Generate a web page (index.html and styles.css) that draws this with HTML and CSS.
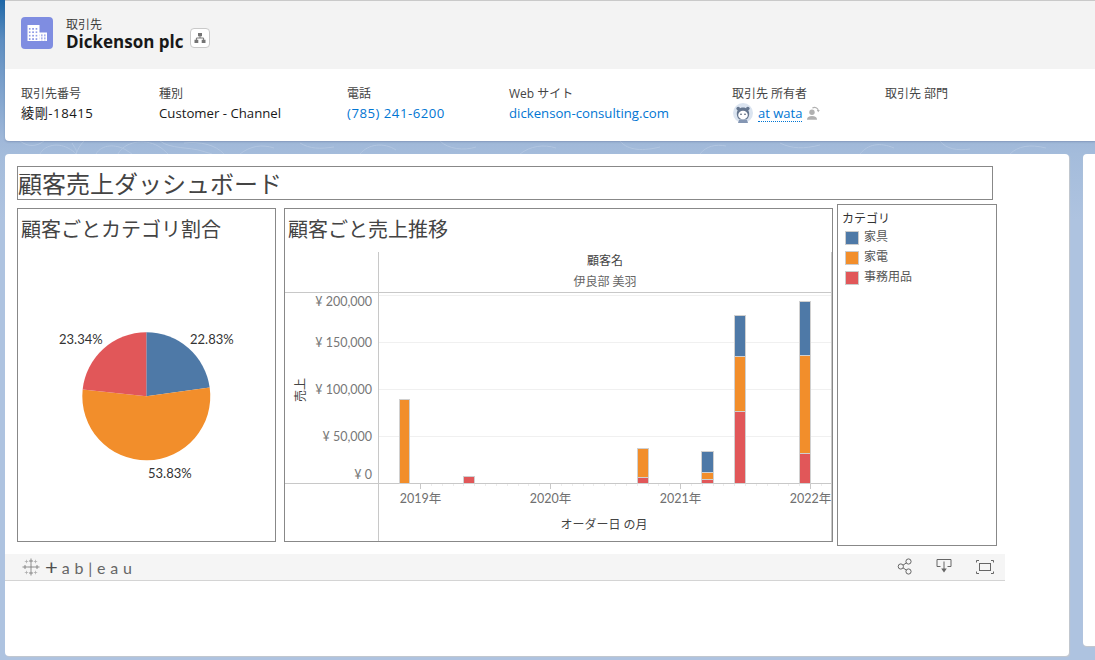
FILE: index.html
```html
<!DOCTYPE html>
<html lang="ja">
<head>
    <meta charset="UTF-8">
    <title>Dickenson plc</title>
    <link rel="stylesheet" href="styles.css">
</head>
<body>
    <!-- 背景の模様 -->
    <svg class="swirls" viewBox="0 141 1095 13" width="1095" height="13">
        <path d="M20 141c8 6 16 6 24 0M40 154c4-8 16-12 28-6 4 2 6 4 8 6M72 143c2 4 6 8 4 11M84 141c-4 4-6 8-8 13M96 154c6-10 20-10 30-4l6 4M118 154c6-12 26-16 40-8 4 2 8 6 10 8M160 141c10 8 30 6 42 10l10 3M184 143c16-2 32 2 40 11M240 154c10-8 22-10 34-6M300 143c10 6 20 6 34 4M360 154c8-10 24-12 36-4M440 141c8 8 24 10 36 6M520 154c10-8 24-10 36-6M620 141c8 10 24 10 40 6M700 154c6-8 16-10 26-8M780 143c12 6 24 6 40 2M860 154c8-10 20-12 34-6M940 141c6 8 18 10 30 8M1010 154c8-8 20-10 36-6" fill="none" stroke="#b2c6e1"/>
    </svg>

    <!-- 取引先ヘッダー -->
    <header class="record">
        <div class="record-top">
            <svg class="record-icon" viewBox="0 0 32 32">
                <defs>
                    <pattern id="windows" x="7.800" y="11" width="3.400" height="3.400" patternUnits="userSpaceOnUse">
                        <rect width="1.700" height="1.700" fill="#8f9be6"/>
                    </pattern>
                    <pattern id="windows-low" x="20" y="17.500" width="3" height="3" patternUnits="userSpaceOnUse">
                        <rect width="1.600" height="1.600" fill="#8f9be6"/>
                    </pattern>
                </defs>
                <rect width="32" height="32" rx="4" fill="#7f8de1"/>
                <rect x="6.500" y="8" width="12" height="16" fill="#fff"/>
                <rect x="7.500" y="11" width="10.500" height="12.500" fill="url(#windows)"/>
                <rect x="17" y="15.500" width="9" height="8.500" fill="#fff"/>
                <rect x="18.500" y="17" width="6.500" height="6.500" fill="url(#windows-low)"/>
            </svg>
            <div class="record-name">
                <div class="record-type">取引先</div>
                <h1>Dickenson plc</h1>
            </div>
            <button class="hierarchy-btn">
                <svg viewBox="0 0 12 12" width="12" height="12">
                    <path d="M4 1h4v3.200H4zM0.500 7.800h3.800V11H0.500zM7.700 7.800h3.800V11H7.700z" fill="#747474"/>
                    <path d="M6 4v2H2.400v2M6 6h3.600v2" fill="none" stroke="#747474"/>
                </svg>
            </button>
        </div>
        <div class="fields">
            <div><div class="field-label">取引先番号</div><div class="field-value num">綾剛-18415</div></div>
            <div><div class="field-label">種別</div><div class="field-value">Customer - Channel</div></div>
            <div><div class="field-label">電話</div><div class="field-value num link">(785) 241-6200</div></div>
            <div><div class="field-label">Web サイト</div><div class="field-value link">dickenson-consulting.com</div></div>
            <div>
                <div class="field-label">取引先 所有者</div>
                <div class="field-value owner">
                    <svg class="avatar" viewBox="0 0 20 20">
                        <circle cx="10" cy="10" r="10" fill="#dbe4f0"/>
                        <circle cx="5.200" cy="5.600" r="1.800" fill="#65768f"/>
                        <circle cx="14.800" cy="5.600" r="1.800" fill="#65768f"/>
                        <path d="M3.800 11c0-4 2.700-6.400 6.200-6.400s6.200 2.400 6.200 6.400c0 3-1.800 5-3 5.600H6.800c-1.200-.6-3-2.600-3-5.600z" fill="#65768f"/>
                        <ellipse cx="10" cy="12" rx="4.800" ry="4.300" fill="#fff"/>
                        <circle cx="8" cy="11.200" r=".8" fill="#3a4a62"/>
                        <circle cx="12" cy="11.200" r=".8" fill="#3a4a62"/>
                        <path d="M6 17h8l1 3H5z" fill="#8496b3"/>
                    </svg>
                    <span class="owner-name link">at wata</span>
                    <svg class="owner-change" viewBox="0 0 14 14">
                        <circle cx="6" cy="6.200" r="2.700" fill="#b0b0b0"/>
                        <path d="M1 13.800c0-2.600 1.800-3.800 5-3.800s5 1.200 5 3.800z" fill="#b0b0b0"/>
                        <path d="M6.400 2c2.600-1.400 5.400-.4 6 2.600" fill="none" stroke="#b0b0b0" stroke-width="1.100"/>
                        <path d="M10.800 4h3l-1.500 2.200z" fill="#b0b0b0"/>
                    </svg>
                </div>
            </div>
            <div><div class="field-label">取引先 部門</div></div>
        </div>
    </header>

    <div class="cards">
        <main class="dash-card">
            <div class="dash-title">顧客売上ダッシュボード</div>

            <div class="dash-row">
                <section class="panel pie-panel">
                    <h2>顧客ごとカテゴリ割合</h2>
                    <!-- viewBox はページ座標のまま -->
                    <svg class="plot" viewBox="18 249 257 292" width="257" height="292">
                        <path d="M146.300 396.300V332.300A64 64 0 0 1 209.700 387.600Z" fill="#4e79a7"/>
                        <path d="M146.300 396.300L209.700 387.600A64 64 0 1 1 82.650 389.600Z" fill="#f28e2b"/>
                        <path d="M146.300 396.300L82.650 389.600A64 64 0 0 1 146.300 332.300Z" fill="#e15759"/>
                        <text class="pct" x="190" y="344">22.83%</text>
                        <text class="pct" x="59" y="344">23.34%</text>
                        <text class="pct" x="148" y="478">53.83%</text>
                    </svg>
                </section>

                <section class="panel chart-panel">
                    <h2>顧客ごと売上推移</h2>
                    <svg class="plot" viewBox="285 249 547 292" width="547" height="292">
                        <path class="grid" d="M378 295.500H831M378 342.500H831M378 389.500H831M378 436.500H831"/>
                        <path class="axis" d="M378.500 252V541M285 292.500H831M285 483.500H831M831.500 252V541"/>
                        <path class="axis" d="M420.500 484v5M550.500 484v5M680.500 484v5M810.500 484v5"/>
                        <path class="minor" d="M431.500 484v2M442.500 484v2M453.500 484v2M463.500 484v2M474.500 484v2M485.500 484v2M496.500 484v2M507.500 484v2M518.500 484v2M528.500 484v2M539.500 484v2M561.500 484v2M572.500 484v2M583.500 484v2M593.500 484v2M604.500 484v2M615.500 484v2M626.500 484v2M637.500 484v2M648.500 484v2M658.500 484v2M669.500 484v2M691.500 484v2M702.500 484v2M713.500 484v2M723.500 484v2M734.500 484v2M745.500 484v2M756.500 484v2M767.500 484v2M778.500 484v2M788.500 484v2M799.500 484v2M821.500 484v2"/>

                        <text class="head" x="605" y="265">顧客名</text>
                        <text class="head sub" x="605" y="286">伊良部 美羽</text>

                        <text class="tick" x="372" y="306">¥ 200,000</text>
                        <text class="tick" x="372" y="347">¥ 150,000</text>
                        <text class="tick" x="372" y="394">¥ 100,000</text>
                        <text class="tick" x="372" y="441">¥ 50,000</text>
                        <text class="tick" x="372" y="479">¥ 0</text>
                        <text class="axis-title" transform="translate(305 390) rotate(-90)">売上</text>

                        <text class="year" x="420.500" y="503">2019年</text>
                        <text class="year" x="550.500" y="503">2020年</text>
                        <text class="year" x="680.500" y="503">2021年</text>
                        <text class="year" x="810.500" y="503">2022年</text>
                        <text class="head" x="604" y="529">オーダー日 の月</text>

                        <rect class="bar orange" x="399.500" y="399.500" width="10" height="84"/>
                        <rect class="bar red" x="463.500" y="476.500" width="11" height="7"/>

                        <rect class="bar orange" x="637.500" y="448.500" width="11" height="29"/>
                        <rect class="bar red" x="637.500" y="477.500" width="11" height="6"/>

                        <rect class="bar blue" x="701.500" y="451.500" width="12" height="21"/>
                        <rect class="bar orange" x="701.500" y="472.500" width="12" height="7"/>
                        <rect class="bar red" x="701.500" y="479.500" width="12" height="4"/>

                        <rect class="bar blue" x="734.500" y="315.500" width="11" height="41"/>
                        <rect class="bar orange" x="734.500" y="356.500" width="11" height="55"/>
                        <rect class="bar red" x="734.500" y="411.500" width="11" height="72"/>

                        <rect class="bar blue" x="799.500" y="301.500" width="11" height="54"/>
                        <rect class="bar orange" x="799.500" y="355.500" width="11" height="98"/>
                        <rect class="bar red" x="799.500" y="453.500" width="11" height="30"/>
                    </svg>
                </section>

                <aside class="panel legend">
                    <div class="legend-title">カテゴリ</div>
                    <div class="legend-item"><span class="swatch sw-blue"></span>家具</div>
                    <div class="legend-item"><span class="swatch sw-orange"></span>家電</div>
                    <div class="legend-item"><span class="swatch sw-red"></span>事務用品</div>
                </aside>
            </div>

            <div class="tab-bar">
                <svg class="tab-mark" viewBox="0 0 18 18" width="18" height="18">
                    <path class="mark-big" d="M9 5.500v7M5.500 9h7M9 .5v5M7 3h4M9 12.500v5M7 15h4M.5 9h5M3 7v4M12.500 9h5M15 7v4"/>
                    <path class="mark-small" d="M4.500 1.800v3.400M2.800 3.500h3.400M13.500 1.800v3.400M11.800 3.500h3.400M4.500 12.800v3.400M2.800 14.500h3.400M13.500 12.800v3.400M11.800 14.500h3.400"/>
                </svg>
                <span class="tab-plus">+</span>
                <span class="tab-word">ab|eau</span>
                <div class="tab-actions">
                    <svg viewBox="0 0 16 18" width="16" height="18">
                        <circle cx="11.500" cy="3.500" r="2.600" class="tool"/>
                        <circle cx="3.800" cy="8.500" r="2.600" class="tool"/>
                        <circle cx="11.500" cy="13.500" r="2.600" class="tool"/>
                        <path d="M6 7.200l3.300-2.300M6 9.800l3.300 2.300" class="tool"/>
                    </svg>
                    <svg viewBox="0 0 16 18" width="16" height="18">
                        <path d="M4.500 8.500H1V1.500H15V8.500H11.500M8 3.500V11" class="tool"/>
                        <path d="M5.200 10.500h5.600L8 14.500z" fill="#666"/>
                    </svg>
                    <svg viewBox="0 0 18 18" width="18" height="18">
                        <rect x="3.500" y="5.500" width="11" height="7" class="tool"/>
                        <path d="M0.500 4.500V2.500H3M15 2.500H17.500V4.500M17.500 13.500V15.500H15M3 15.500H0.500V13.500" class="tool"/>
                    </svg>
                </div>
            </div>
        </main>
        <div class="side-card"></div>
    </div>
</body>
</html>
```

FILE: styles.css
```css
* {
    box-sizing: border-box;
}

body {
    position: relative;
    margin: 0;
    height: 660px;
    overflow: hidden;
    background: linear-gradient(#1f68a8 0, #5d8dc0 40px, #a0b8d9 141px, #a4bcdb 154px, #aec3e0 220px);
    color: #181818;
    font-family: "Open Sans", "Noto Sans CJK JP", sans-serif;
}

.swirls {
    position: absolute;
    top: 141px;
    left: 0;
}

.record {
    position: relative;
    margin-left: 5px;
    height: 141px;
    background: #fff;
    border-top: 1px solid #c9c9c9;
    border-bottom-left-radius: 4px;
    box-shadow: 0 1px 2px rgba(60, 80, 120, 0.3);
}

.record-top {
    display: flex;
    align-items: center;
    height: 68px;
    padding: 0 16px 4px;
    background: #f3f3f3;
}

.record-icon {
    width: 32px;
    height: 32px;
}

.record-name {
    margin: 3px 0 0 13px;
}

.record-type {
    font-size: 12px;
    line-height: 14px;
    color: #3e3e3c;
}

h1 {
    margin: 0;
    font-size: 17px;
    line-height: 20px;
    font-weight: 700;
}

.hierarchy-btn {
    display: flex;
    align-items: center;
    justify-content: center;
    width: 20px;
    height: 20px;
    margin: 10px 0 0 6px;
    padding: 0;
    background: #fff;
    border: 1px solid #c9c9c9;
    border-radius: 4px;
}

.fields {
    display: grid;
    grid-template-columns: 138px 188px 162px 223px 153px 1fr;
    padding: 16px 16px 0;
}

.field-label {
    font-size: 12px;
    line-height: 18px;
    color: #444;
}

.field-value {
    font-size: 13.2px;
    line-height: 20px;
}

.num {
    letter-spacing: 0.5px;
}

.link {
    color: #0176d3;
}

.owner {
    display: flex;
    align-items: center;
}

.avatar {
    width: 20px;
    height: 20px;
    margin-left: 1px;
}

.owner-name {
    margin-left: 5px;
    font-size: 13px;
    line-height: 16px;
    border-bottom: 1px dotted #0176d3;
}

.owner-change {
    width: 14px;
    height: 14px;
    margin-left: 4px;
}

.cards {
    position: relative;
    display: flex;
    align-items: flex-start;
    margin: 13px 0 0 5px;
}

.dash-card {
    flex: none;
    width: 1064px;
    height: 502px;
    padding: 12px 0 0 12px;
    background: #fff;
    border-radius: 4px;
    box-shadow: 1px 1px 1px #c4c8ce;
}

.side-card {
    flex: none;
    width: 30px;
    height: 492px;
    margin-left: 14px;
    background: #fff;
    border-radius: 4px 0 0 4px;
    box-shadow: 0 1px 1px #c4c8ce;
}

.dash-title {
    width: 976px;
    height: 34px;
    border: 1px solid #888;
    font-size: 24px;
    line-height: 34px;
    color: #444;
}

.dash-row {
    display: flex;
    align-items: flex-start;
    margin-top: 8px;
    height: 338px;
}

.panel {
    background: #fff;
    border: 1px solid #888;
}

.panel h2 {
    margin: 0;
    height: 40px;
    padding-left: 3px;
    font-size: 20px;
    line-height: 42px;
    font-weight: 400;
    color: #444;
}

.pie-panel {
    width: 259px;
    height: 334px;
}

.chart-panel {
    width: 549px;
    height: 334px;
    margin-left: 8px;
}

.plot {
    display: block;
}

.legend {
    width: 160px;
    height: 342px;
    margin: -4px 0 0 4px;
    padding: 5px 0 0 4px;
}

.legend-title {
    font-size: 12px;
    line-height: 17px;
    color: #333;
}

.legend-item {
    display: flex;
    align-items: center;
    height: 20px;
    padding-left: 3px;
    font-size: 12px;
    line-height: 18px;
    color: #555;
}

.swatch {
    width: 14px;
    height: 14px;
    margin: 2px 5px 0 0;
    border: 1px solid #ccc;
}

.sw-blue { background: #4e79a7; }
.sw-orange { background: #f28e2b; }
.sw-red { background: #e15759; }

/* チャート内のテキスト */
.pct {
    font: 13px "Lato", "Noto Sans CJK JP", sans-serif;
    fill: #333;
}

.head {
    font: 12px "Lato", "Noto Sans CJK JP", sans-serif;
    fill: #444;
    text-anchor: middle;
}

.sub {
    fill: #666;
}

.tick {
    font: 12.5px "Lato", "Noto Sans CJK JP", sans-serif;
    fill: #777;
    text-anchor: end;
}

.year {
    font: 12.5px "Lato", "Noto Sans CJK JP", sans-serif;
    fill: #707070;
    text-anchor: middle;
}

.axis-title {
    font: 12px "Noto Sans CJK JP", sans-serif;
    fill: #444;
    text-anchor: middle;
}

.grid {
    stroke: #f0f0f0;
    fill: none;
}

.axis {
    stroke: #c8c8c8;
    fill: none;
}

.minor {
    stroke: #ececec;
    fill: none;
}

.bar {
    stroke: #d0d0d0;
    stroke-width: 1;
}

.blue { fill: #4e79a7; }
.orange { fill: #f28e2b; }
.red { fill: #e15759; }

.tab-bar {
    display: flex;
    align-items: center;
    width: 1000px;
    height: 27px;
    margin: 8px 0 0 -12px;
    padding: 0 11px 0 17px;
    background: #f5f5f5;
    border-bottom: 1px solid #d4d4d4;
}

.mark-big {
    fill: none;
    stroke: #808080;
    stroke-width: 0.9;
}

.mark-small {
    fill: none;
    stroke: #a8a8a8;
    stroke-width: 0.7;
}

.tab-plus {
    margin-left: 5px;
    font: 400 22px/20px "Lato", sans-serif;
    color: #505050;
}

.tab-word {
    margin-left: 4px;
    font: 16px "Lato", sans-serif;
    letter-spacing: 4.8px;
    color: #666;
}

.tab-actions {
    display: flex;
    align-items: center;
    gap: 23px;
    margin-left: auto;
}

.tab-actions svg:last-child {
    margin-left: 1px;
}

.tool {
    fill: none;
    stroke: #666;
    stroke-width: 1;
}
```
